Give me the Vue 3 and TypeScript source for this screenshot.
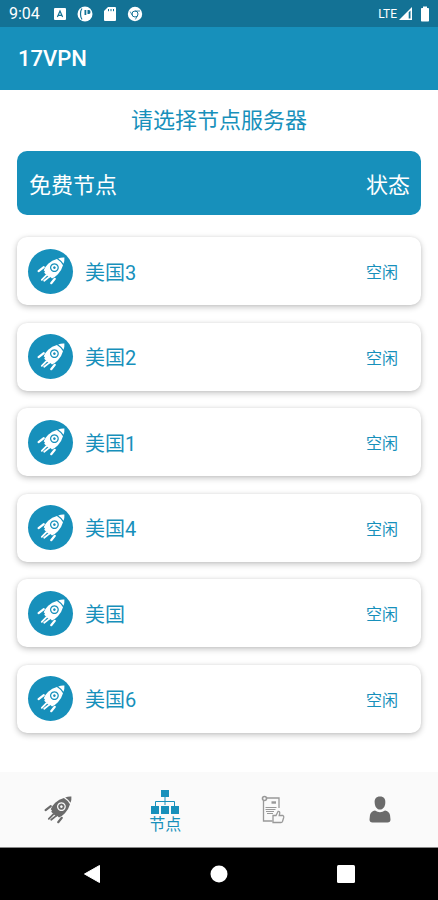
<script setup lang="ts">
interface Server {
  id: number
  name: string
  status: string
}

const servers: Server[] = [
  { id: 1, name: '美国3', status: '空闲' },
  { id: 2, name: '美国2', status: '空闲' },
  { id: 3, name: '美国1', status: '空闲' },
  { id: 4, name: '美国4', status: '空闲' },
  { id: 5, name: '美国', status: '空闲' },
  { id: 6, name: '美国6', status: '空闲' },
]
</script>

<template>
  <div class="screen">
    <div class="status-bar">
      <span class="clock">9:04</span>
      <div class="notices">
        <svg width="14" height="14" viewBox="0 0 14 14">
          <rect x="1" y="1" width="12" height="12" rx="1" fill="#fff" />
          <path d="M4.4 10 7 4l2.6 6M5.4 8.3h3.2" fill="none" stroke="#137295" stroke-width="1.2" />
        </svg>
        <svg width="16" height="16" viewBox="0 0 16 16">
          <circle cx="8" cy="8" r="7.5" fill="#fff" />
          <path d="M5 2.5C3 5 3 11 5 13.5" fill="none" stroke="#137295" stroke-width="1.2" />
          <path d="M7.500 4h1.800v5H7.500ZM10.500 4H12q1.500 0 1.500 2T12 8h-1.500Z" fill="#137295" />
        </svg>
        <svg width="14" height="16" viewBox="0 0 14 16">
          <path d="M5 1h7q1 0 1 1v12q0 1-1 1H2q-1 0-1-1V5Z" fill="#fff" />
          <path d="M5.5 3v2.2M8 3v2.2M10.5 3v2.2" stroke="#137295" stroke-width="1" />
        </svg>
        <svg width="16" height="16" viewBox="0 0 16 16">
          <circle cx="8" cy="8" r="7.2" fill="#fff" />
          <circle cx="8" cy="8" r="3" fill="none" stroke="#137295" stroke-width="1" />
          <path d="M8 5h5M5.400 9.500 3.200 5.600M10.600 9.500 8.400 13.400" stroke="#137295" stroke-width=".8" />
        </svg>
      </div>
      <div class="signals">
        <span class="network">LTE</span>
        <svg width="15" height="15" viewBox="0 0 15 15">
          <path d="M14 1v13H1Z" fill="#fff" />
          <path d="M10.7 6.2v6.3h1.8V4.5Z" fill="#137295" />
        </svg>
        <svg class="battery" width="10" height="16" viewBox="0 0 10 16">
          <path d="M3 .5h4V2h1.2q.8 0 .8.8V14.700q0 .8-.8.8H1.800q-.8 0-.8-.8V2.800Q1 2 1.800 2H3Z" fill="#fff" />
        </svg>
      </div>
    </div>

    <header class="app-bar">
      <h1>17VPN</h1>
    </header>

    <main class="content">
      <h2 class="prompt">请选择节点服务器</h2>
      <div class="list-head">
        <span>免费节点</span>
        <span>状态</span>
      </div>
      <ul class="servers">
        <li v-for="server in servers" :key="server.id">
          <button type="button" class="server">
            <span class="badge">
              <svg width="28" height="28" viewBox="0 0 28 28"><use href="#rocket" /></svg>
            </span>
            <span class="name">{{ server.name }}</span>
            <span class="state">{{ server.status }}</span>
          </button>
        </li>
      </ul>
    </main>

    <nav class="tabs">
      <a href="#connect" class="tab" aria-label="连接">
        <svg width="28" height="28" viewBox="0 0 28 28">
          <defs>
            <g id="rocket" fill="currentColor">
              <path d="M21.200 1.600Q24.300.3 27.400.6Q27.700 3.700 26.500 6.800Q24.300 3.600 21.200 1.600Z" />
              <path fill-rule="evenodd" d="M19.900 2.100Q23.700 4.500 26 8.200Q24.700 13.200 20.900 17.200Q18 20.200 15 21.600L13.500 20.100L12.500 21L7.200 15.700L8 14.600L6.700 13.200Q8.300 9.700 11.200 6.800Q15.100 3.100 19.900 2.100ZM17.400 6.200a4.400 4.400 0 1 0 .01 0Z" />
              <path fill-rule="evenodd" d="M17.400 7.400a3.200 3.200 0 1 0 .01 0ZM17.400 9.300a1.300 1.300 0 1 1-.01 0Z" />
              <path d="M1.600 14.200 6.800 10.200M14.200 26.200 17.800 21.800" fill="none" stroke="currentColor" stroke-width="2.200" stroke-linecap="round" />
              <path d="M4.800 22.800 9.200 18.400M7.200 23.800 11.200 20.600" fill="none" stroke="currentColor" stroke-width="1.800" stroke-linecap="round" />
            </g>
          </defs>
          <use href="#rocket" />
        </svg>
      </a>
      <a href="#nodes" class="tab active" aria-current="page">
        <svg width="28" height="26" viewBox="0 0 28 26">
          <path d="M14 8v8M4.500 18v-5.500h19V18" fill="none" stroke="currentColor" stroke-width="1" />
          <path d="M10 1h8v7h-8ZM0 17h8v8H0ZM10 17h8v8h-8ZM20 17h8v8h-8Z" fill="currentColor" />
        </svg>
        <span>节点</span>
      </a>
      <a href="#orders" class="tab orders" aria-label="订单">
        <svg width="24" height="30" viewBox="0 0 24 30" fill="none" stroke="currentColor">
          <path d="M5 3h13v10M2.500 6v20h9" stroke-width="1.300" />
          <circle cx="3.500" cy="3.500" r="2" stroke-width="1.600" />
          <path d="M10.500 7.500h4.500" stroke-width="2.400" />
          <path d="M4.500 12.500h11M4.500 14.500h10M5 16.500h8M6 18.500h6" stroke-width="1.200" />
          <path d="M12 20.500h3l2-4q2-.5 1.700 2l-.5 2H22q1 .5.700 2l-1.200 4q-.4 1-1.500 1h-8Z" stroke-width="1.300" />
        </svg>
      </a>
      <a href="#profile" class="tab" aria-label="我的">
        <svg width="24" height="30" viewBox="0 0 24 30">
          <path d="M12 1.500c4 0 5.700 2.600 5.300 6.400C17 12 14.800 14.500 12 14.500S7 12 6.700 7.900C6.300 4.100 8 1.500 12 1.500Z" fill="currentColor" />
          <path d="M7 15.500q5 3.500 10 0 4 .8 5 4.500l.5 4.500q0 3-3 3h-15q-3 0-3-3L2 20q1-3.700 5-4.500Z" fill="currentColor" />
        </svg>
      </a>
    </nav>

    <div class="system-nav">
      <button type="button" aria-label="返回">
        <svg width="18" height="20" viewBox="0 0 18 20"><path d="M16.500 1.500v17L1.500 10Z" fill="#fff" stroke="#fff" stroke-linejoin="round" /></svg>
      </button>
      <button type="button" aria-label="主页">
        <svg width="18" height="18" viewBox="0 0 18 18"><circle cx="9" cy="9" r="8.500" fill="#fff" /></svg>
      </button>
      <button type="button" aria-label="最近任务">
        <svg width="18" height="18" viewBox="0 0 18 18"><rect width="18" height="18" rx="1.500" fill="#fff" /></svg>
      </button>
    </div>
  </div>
</template>

<style>
body {
  margin: 0;
  background: #fff;
}
</style>

<style scoped>
.screen {
  display: flex;
  flex-direction: column;
  min-height: 100vh;
  color: #1790bb;
  font-family: Roboto, "Noto Sans CJK SC", sans-serif;
}

button {
  padding: 0;
  border: 0;
  background: none;
  color: inherit;
  font: inherit;
  cursor: pointer;
}

svg {
  display: block;
  flex: none;
}

.status-bar {
  display: flex;
  align-items: center;
  height: 27px;
  padding: 0 8px 0 9px;
  background: #137295;
  color: #fff;
}

.clock {
  font-size: 16px;
}

.notices {
  display: flex;
  align-items: center;
  gap: 10px;
  margin-left: 13px;
}

.signals {
  display: flex;
  align-items: center;
  gap: 1px;
  margin-left: auto;
}

.network {
  font-size: 12px;
}

.battery {
  margin-left: 6px;
}

.app-bar {
  display: flex;
  align-items: center;
  height: 63px;
  padding: 0 18px;
  background: #1790bb;
  color: #fff;
}

.app-bar h1 {
  margin: 0;
  font-size: 22px;
  font-weight: 500;
  line-height: 32px;
}

.content {
  display: flex;
  flex: 1;
  flex-direction: column;
  padding: 15px 17px 39px;
}

.prompt {
  margin: 0;
  font-size: 22px;
  font-weight: 400;
  line-height: 32px;
  text-align: center;
}

.list-head {
  display: flex;
  align-items: center;
  justify-content: space-between;
  height: 64px;
  margin: 14px 0 22px;
  padding: 0 11px 0 12px;
  border-radius: 10px;
  background: #1790bb;
  color: #fff;
  font-size: 22px;
}

.servers {
  display: flex;
  flex: 1;
  flex-direction: column;
  justify-content: space-between;
  margin: 0;
  padding: 0;
  list-style: none;
}

.server {
  display: flex;
  align-items: center;
  width: 100%;
  height: 68px;
  padding: 0 23px 0 11px;
  border-radius: 10px;
  background: #fff;
  box-shadow: 0 2px 6px rgb(0 0 0 / 24%), 0 0 3px rgb(0 0 0 / 6%);
}

.badge {
  display: grid;
  place-items: center;
  width: 45px;
  height: 45px;
  border-radius: 50%;
  background: #1790bb;
  color: #fff;
}

.name {
  margin-left: 12px;
  font-size: 20px;
}

.state {
  margin-left: auto;
  font-size: 16px;
}

.tabs {
  display: flex;
  height: 75px;
  padding: 0 4px;
  border-bottom: 1px solid #888;
  background: #fafafa;
}

.tab {
  display: flex;
  flex: 1;
  flex-direction: column;
  align-items: center;
  justify-content: center;
  color: #6b6b6b;
  font-size: 16px;
  line-height: 20px;
  text-decoration: none;
}

.tab.active {
  padding-top: 4px;
  color: #1790bb;
}

.tab.orders {
  color: #999;
}

.system-nav {
  display: flex;
  height: 52px;
  padding: 0 29px;
  background: #000;
}

.system-nav button {
  display: grid;
  flex: 1;
  place-items: center;
}
</style>
